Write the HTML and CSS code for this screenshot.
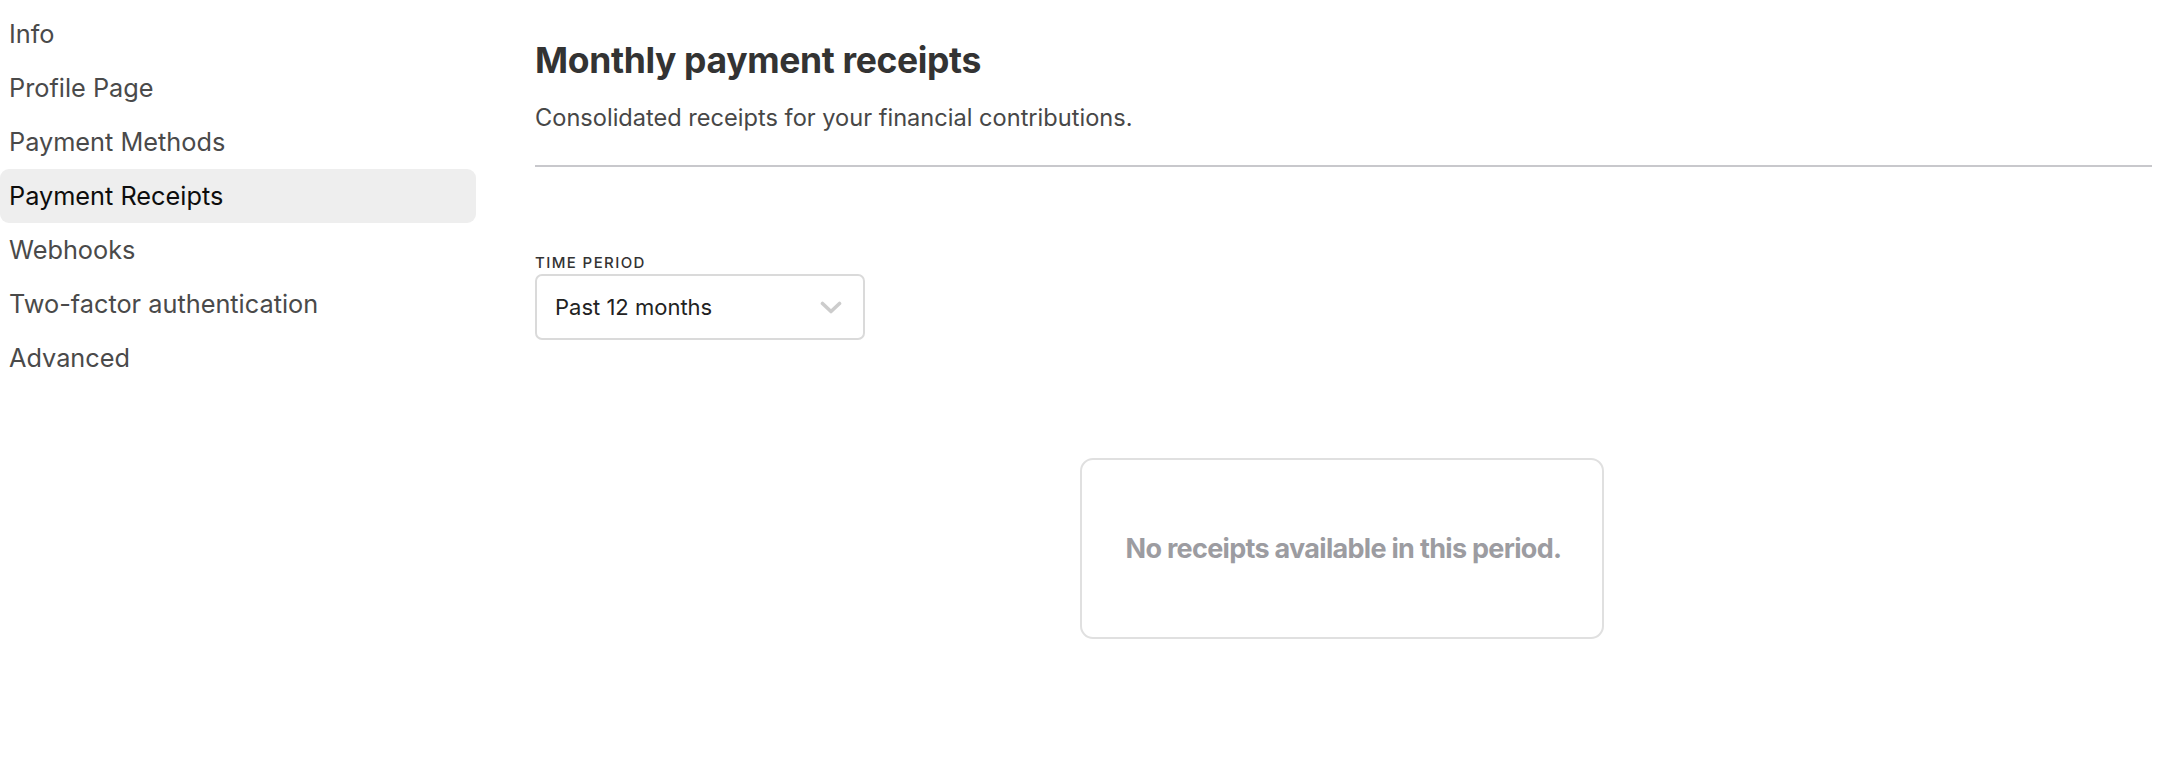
FILE: index.html
```html
<!DOCTYPE html>
<html lang="en">
<head>
<meta charset="utf-8">
<title>Payment Receipts</title>
<link rel="stylesheet" href="styles.css">
</head>
<body>
<div class="layout">
  <nav class="sidebar">
    <a class="nav-item" href="#">Info</a>
    <a class="nav-item" href="#">Profile Page</a>
    <a class="nav-item" href="#">Payment Methods</a>
    <a class="nav-item active" href="#">Payment Receipts</a>
    <a class="nav-item" href="#">Webhooks</a>
    <a class="nav-item" href="#">Two-factor authentication</a>
    <a class="nav-item" href="#">Advanced</a>
  </nav>
  <main class="content">
    <header class="page-header">
      <h1 class="title">Monthly payment receipts</h1>
      <p class="subtitle">Consolidated receipts for your financial contributions.</p>
    </header>
    <div class="field">
      <label class="field-label">TIME PERIOD</label>
      <div class="select">
        <span class="select-value">Past 12 months</span>
        <svg class="chevron" width="22" height="13" viewBox="0 0 22 13" aria-hidden="true">
          <path d="M2.5 2.5 L11 10.5 L19.5 2.5" fill="none" stroke="#cccccc" stroke-width="3.6" stroke-linecap="round" stroke-linejoin="round"/>
        </svg>
      </div>
    </div>
    <div class="empty">No receipts available in this period.</div>
  </main>
</div>
</body>
</html>
```

FILE: styles.css
```css
* { box-sizing: border-box; }

html, body {
  margin: 0;
  padding: 0;
  background: #ffffff;
  font-family: Inter, "Noto Sans", "Liberation Sans", sans-serif;
}

.layout {
  display: flex;
  align-items: flex-start;
}

.sidebar {
  width: 476px;
  flex: 0 0 476px;
  padding-top: 7px;
  display: flex;
  flex-direction: column;
}

.nav-item {
  display: block;
  height: 54px;
  line-height: 54px;
  padding-left: 9px;
  font-size: 25.3px;
  color: #4a4a4a;
  text-decoration: none;
  border-radius: 9px;
}

.nav-item.active {
  background: #eeeeee;
  color: #0d0d0d;
}

.content {
  flex: 1;
  margin-left: 59px;
  padding-right: 22px;
  padding-top: 39px;
}

.page-header {
  border-bottom: 2px solid #c8c8cc;
  padding-bottom: 29px;
}

.title {
  margin: 0;
  font-size: 35.5px;
  line-height: 44px;
  font-weight: 700;
  letter-spacing: -0.35px;
  color: #333333;
}

.subtitle {
  margin: 17px 0 0;
  font-size: 23.6px;
  line-height: 36px;
  color: #474747;
}

.field {
  margin-top: 86px;
  display: flex;
  flex-direction: column;
  align-items: flex-start;
}

.field-label {
  font-size: 15px;
  line-height: 20px;
  font-weight: 500;
  letter-spacing: 1.4px;
  color: #333333;
  margin-bottom: 1px;
}

.select {
  width: 330px;
  height: 66px;
  border: 2px solid #dadada;
  border-radius: 7px;
  display: flex;
  align-items: center;
  justify-content: space-between;
  padding: 0 21px 0 18px;
}

.select-value {
  font-size: 22px;
  color: #222222;
}

.chevron {
  display: block;
}

.empty {
  width: 524px;
  margin: 118px auto 0;
  padding: 69px 44px;
  border: 2px solid #e0e0e0;
  border-radius: 13px;
  text-align: center;
  font-size: 27px;
  line-height: 39px;
  font-weight: 700;
  letter-spacing: -0.7px;
  color: #9c9ca1;
  white-space: nowrap;
  transform: translateX(-2px);
}
```
